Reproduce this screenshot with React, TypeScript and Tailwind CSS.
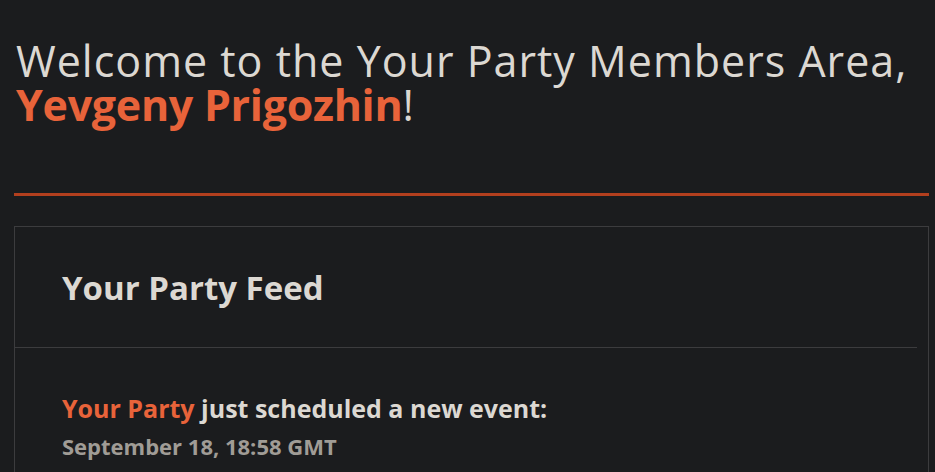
import React from 'react';

const App: React.FC = () => {
  return (
    <div className="min-h-screen bg-[#1b1c1e] pl-[14px] pr-[6px] pt-[39px] font-['Open_Sans',sans-serif] text-[#dcd8d2]">
      <h1 className="pl-[2px] text-[43px] leading-[44px] font-normal tracking-[1px]">
        Welcome to the Your Party Members Area,
        <br />
        <span className="font-bold tracking-[-0.3px] text-[#e8633a]">Yevgeny Prigozhin</span>!
      </h1>

      <div className="mt-[66px] h-[3px] w-full bg-[#b23f1e]" />

      <div className="mt-[30px] border border-[#3c3c3e]">
        <div className="px-[47px] pt-[41px] pb-[39px]">
          <h2 className="text-[33px] leading-[40px] font-bold">Your Party Feed</h2>
        </div>
        <div className="mr-[11px] h-px bg-[#3c3c3e]" />
        <div className="px-[47px] pt-[45px] pb-10">
          <p className="text-[25px] leading-[30px] font-bold">
            <span className="text-[#e8633a]">Your Party</span> just scheduled a new event:
          </p>
          <p className="mt-[9px] text-[22px] leading-[28px] font-bold text-[#a09c96]">September 18, 18:58 GMT</p>
        </div>
      </div>
    </div>
  );
};

export default App;
